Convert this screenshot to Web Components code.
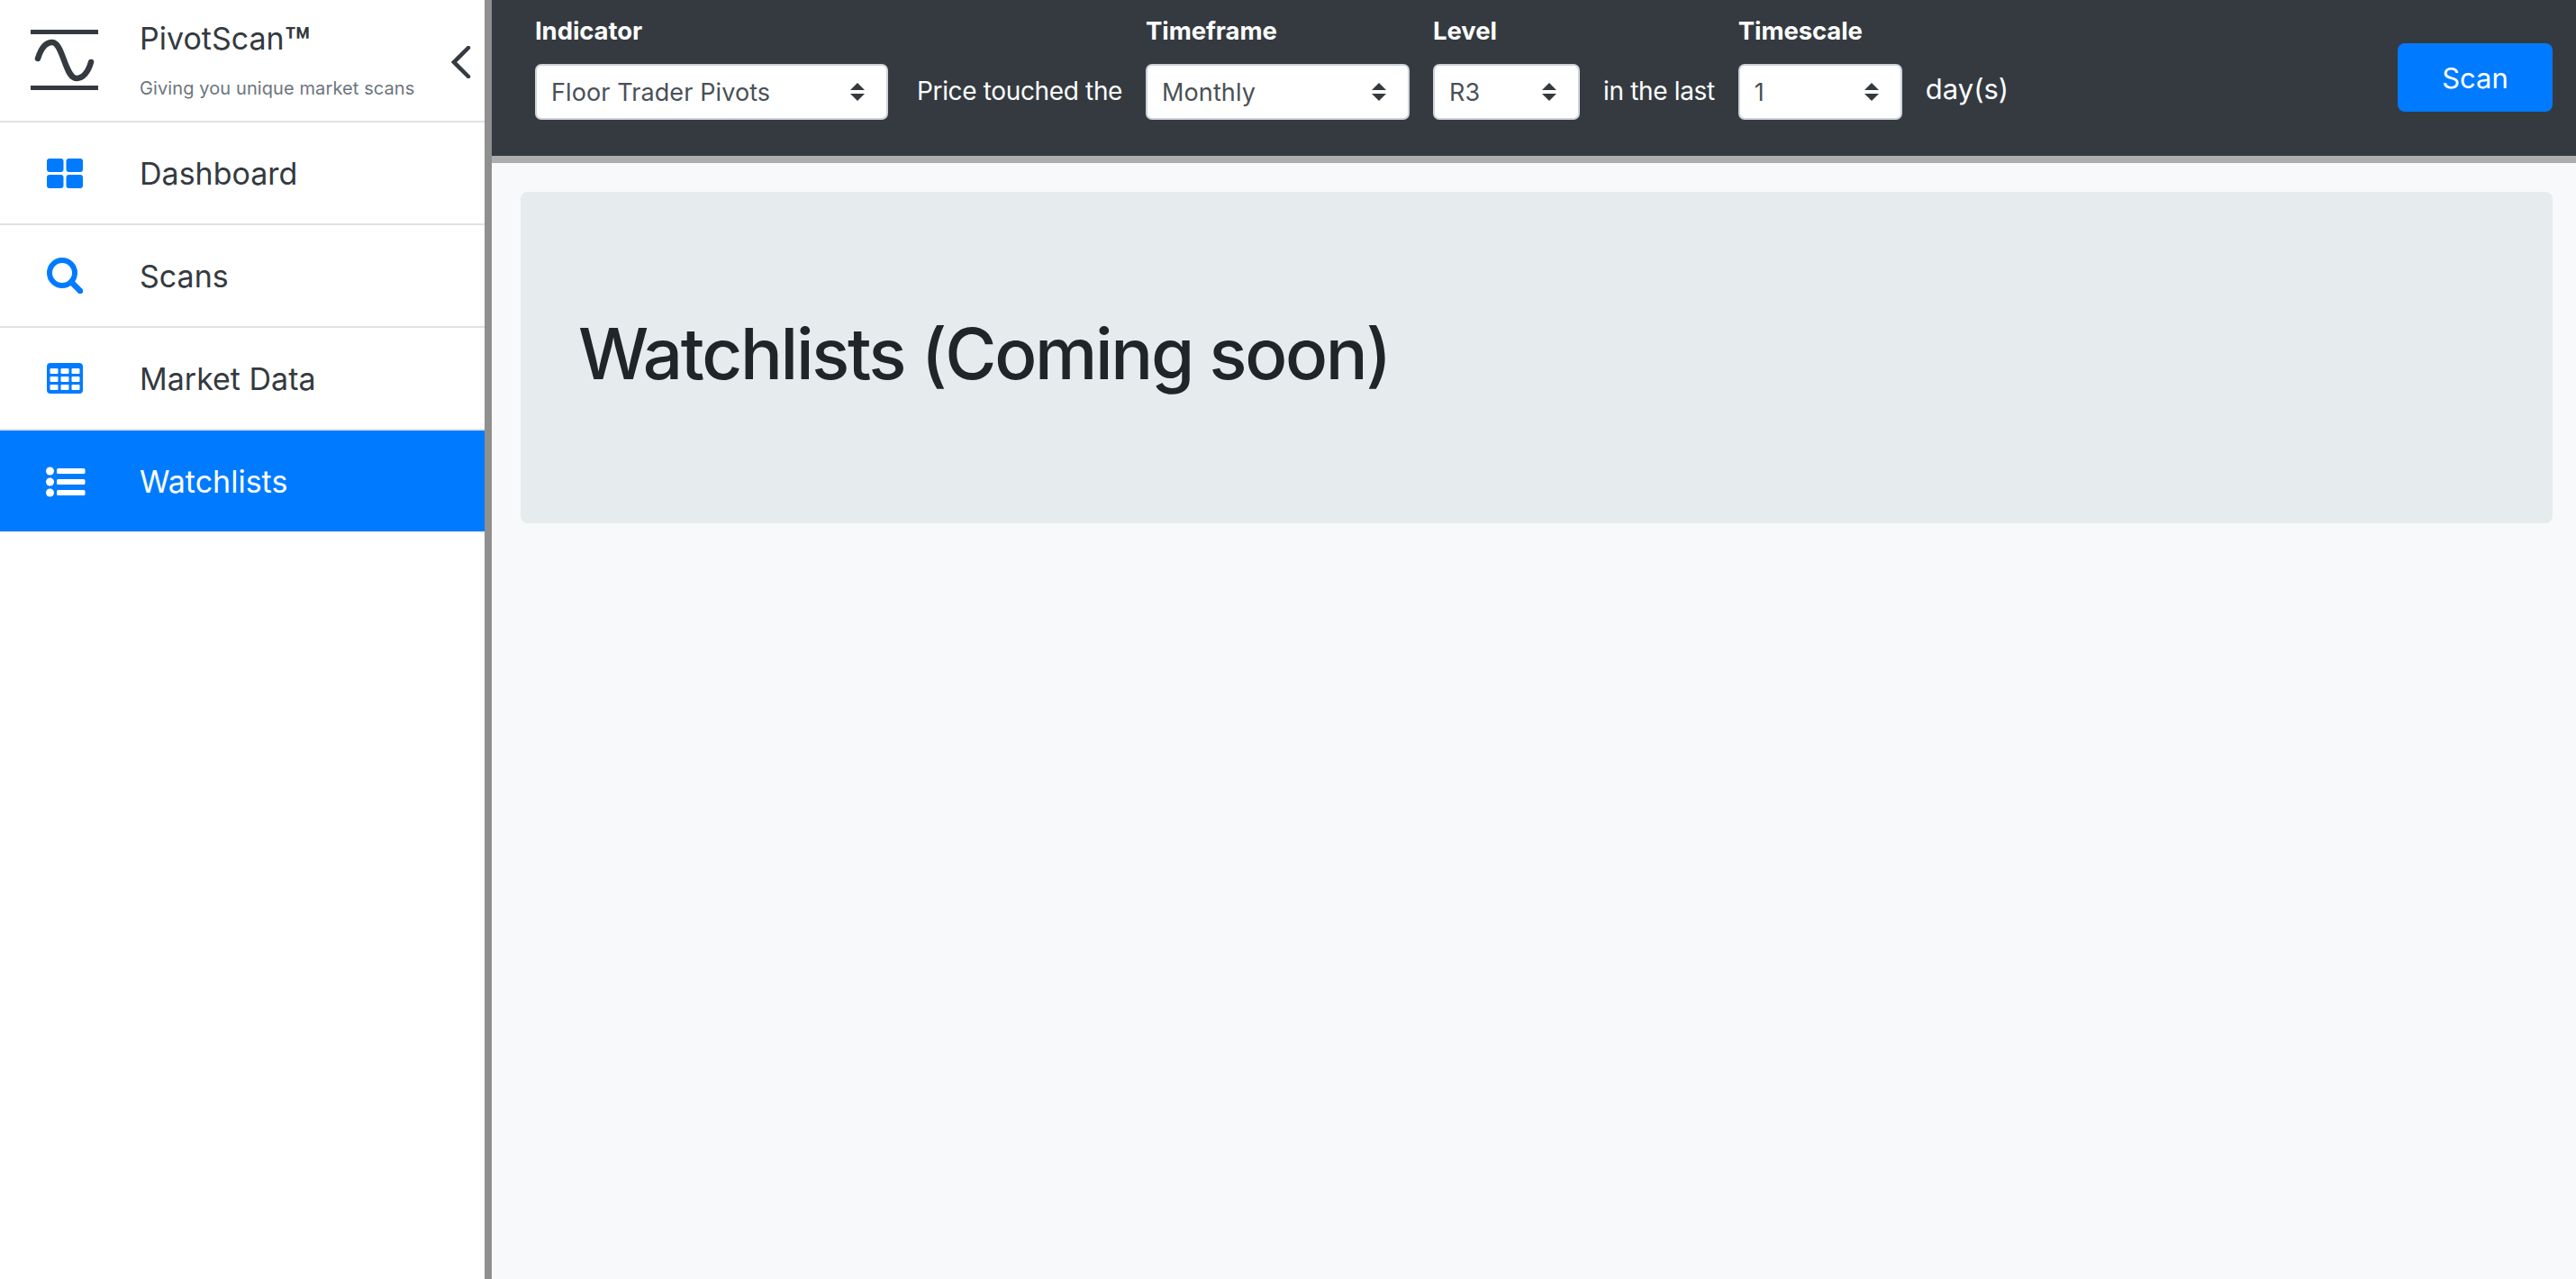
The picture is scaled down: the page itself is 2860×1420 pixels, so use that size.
<!DOCTYPE html>
<html lang="en">
<head>
  <meta charset="UTF-8">
  <title>PivotScan</title>
  <style>
    html, body {
      margin: 0;
      height: 100%;
    }

    body {
      font-family: Inter, "Liberation Sans", sans-serif;
      color: #343a40;
      background: #f8f9fa;
    }
  </style>
</head>
<body>
  <ps-app>
    <ps-sidebar slot="sidebar">
      <ps-nav-item label="Dashboard">
        <svg slot="icon" width="40" height="33" viewBox="0 0 40 33" fill="currentColor">
          <rect width="18.5" height="15" rx="3"/>
          <rect x="21.5" width="18.5" height="15" rx="3"/>
          <rect y="18" width="18.5" height="15" rx="3"/>
          <rect x="21.5" y="18" width="18.5" height="15" rx="3"/>
        </svg>
      </ps-nav-item>
      <ps-nav-item label="Scans">
        <svg slot="icon" width="40" height="40" viewBox="0 0 40 40" fill="none" stroke="currentColor">
          <circle cx="17" cy="17" r="14" stroke-width="6"/>
          <path d="M27 27 L37 37" stroke-width="6.5" stroke-linecap="round"/>
        </svg>
      </ps-nav-item>
      <ps-nav-item label="Market Data">
        <svg slot="icon" width="40" height="34" viewBox="0 0 40 34">
          <rect width="40" height="34" rx="4" fill="currentColor"/>
          <g fill="#fff">
            <rect x="3.5" y="6" width="9" height="6" rx="1"/>
            <rect x="15.5" y="6" width="9" height="6" rx="1"/>
            <rect x="27.5" y="6" width="9" height="6" rx="1"/>
            <rect x="3.5" y="15" width="9" height="6" rx="1"/>
            <rect x="15.5" y="15" width="9" height="6" rx="1"/>
            <rect x="27.5" y="15" width="9" height="6" rx="1"/>
            <rect x="3.5" y="24" width="9" height="6" rx="1"/>
            <rect x="15.5" y="24" width="9" height="6" rx="1"/>
            <rect x="27.5" y="24" width="9" height="6" rx="1"/>
          </g>
        </svg>
      </ps-nav-item>
      <ps-nav-item label="Watchlists" active>
        <svg slot="icon" width="44" height="34" viewBox="0 0 44 34" fill="currentColor" style="margin: 2px 0 0 -1px">
          <circle cx="4.5" cy="5" r="4.5"/>
          <circle cx="4.5" cy="17" r="4.5"/>
          <circle cx="4.5" cy="29" r="4.5"/>
          <rect x="12" y="2" width="31.5" height="6" rx="1.5"/>
          <rect x="12" y="14" width="31.5" height="6" rx="1.5"/>
          <rect x="12" y="26" width="31.5" height="6" rx="1.5"/>
        </svg>
      </ps-nav-item>
    </ps-sidebar>

    <ps-topbar slot="topbar">
      <ps-field label="Indicator"><ps-select value="Floor Trader Pivots" width="392"></ps-select></ps-field>
      <ps-text style="margin-left: 6px">Price touched the</ps-text>
      <ps-field label="Timeframe"><ps-select value="Monthly" width="293"></ps-select></ps-field>
      <ps-field label="Level"><ps-select value="R3" width="163"></ps-select></ps-field>
      <ps-text>in the last</ps-text>
      <ps-field label="Timescale"><ps-select value="1" width="182"></ps-select></ps-field>
      <ps-text style="font-size: 31px; margin-top: 69px; letter-spacing: 0">day(s)</ps-text>
      <ps-button>Scan</ps-button>
    </ps-topbar>

    <ps-jumbotron>Watchlists (Coming soon)</ps-jumbotron>
  </ps-app>

  <script>
    // Small helper so each class only has to say what its shadow root holds
    class PsElement extends HTMLElement {
      constructor() {
        super();
        this.attachShadow({ mode: 'open' });
      }

      connectedCallback() {
        this.shadowRoot.innerHTML = this.render();
      }
    }

    class PsApp extends PsElement {
      render() {
        return `
          <style>
            :host {
              display: flex;
              height: 100vh;
              overflow: hidden;
            }

            .side {
              flex: none;
              width: 538px;
              background: #fff;
              border-right: 8px solid #8f8f8f;
            }

            .main {
              flex: 1;
              min-width: 0;
            }
          </style>
          <div class="side"><slot name="sidebar"></slot></div>
          <div class="main">
            <slot name="topbar"></slot>
            <slot></slot>
          </div>
        `;
      }
    }

    class PsSidebar extends PsElement {
      render() {
        return `
          <style>
            :host {
              display: block;
            }

            header {
              display: flex;
              align-items: flex-start;
              height: 134px;
              padding-left: 34px;
              border-bottom: 2px solid #dee2e6;
            }

            .logo {
              flex: none;
              margin-top: 33px;
              margin-right: 46px;
            }

            .title {
              margin-top: 21px;
              font-size: 34px;
              line-height: 44px;
              color: #343a40;
            }

            /* Inter's trademark sign sits high and thin, the reference one is close to the caps */
            .tm {
              position: relative;
              top: 9px;
              font-size: 1.35em;
              font-weight: 600;
              line-height: 0;
            }

            .sub {
              margin-top: 18px;
              font-size: 20px;
              line-height: 30px;
              letter-spacing: 0.1px;
              color: #6c757d;
              white-space: nowrap;
            }

            .back {
              margin: 51px 15px 0 auto;
            }
          </style>
          <header>
            <svg class="logo" width="75" height="67" viewBox="0 0 75 67" fill="none" stroke="#343a40">
              <path d="M0 2.5H75M0 64.5H75" stroke-width="5"/>
              <path d="M8 32C12 19 18 14 24 14C36 14 38 54 51 54C58 54 64 47 67 36" stroke-width="6.5" stroke-linecap="round"/>
            </svg>
            <div>
              <div class="title">PivotScan<span class="tm">™</span></div>
              <div class="sub">Giving you unique market scans</div>
            </div>
            <svg class="back" width="22" height="36" viewBox="0 0 22 36" fill="none" stroke="#343a40" stroke-width="4.5" stroke-linecap="round">
              <path d="M19 2L3 18L19 34"/>
            </svg>
          </header>
          <slot></slot>
        `;
      }
    }

    class PsNavItem extends PsElement {
      render() {
        return `
          <style>
            :host {
              display: flex;
              align-items: center;
              height: 112px;
              padding-left: 52px;
              border-bottom: 2px solid #dee2e6;
              color: #343a40;
              font-size: 34px;
            }

            :host([active]) {
              background: #007bff;
              color: #fff;
              border-bottom-color: #f1f3f5;
            }

            .icon {
              flex: none;
              display: flex;
              width: 103px;
              color: #007bff;
            }

            :host([active]) .icon {
              color: #fff;
            }
          </style>
          <span class="icon"><slot name="icon"></slot></span>
          <span>${this.getAttribute('label')}</span>
        `;
      }
    }

    class PsTopbar extends PsElement {
      render() {
        return `
          <style>
            :host {
              display: flex;
              align-items: flex-start;
              gap: 26px;
              height: 173px;
              padding-left: 48px;
              background: #343a40;
              border-bottom: 8px solid #adadad;
              color: #fff;
            }
          </style>
          <slot></slot>
        `;
      }
    }

    class PsField extends PsElement {
      render() {
        return `
          <style>
            :host {
              display: flex;
              flex-direction: column;
              padding-top: 15px;
            }

            label {
              height: 56px;
              font-size: 27.5px;
              line-height: 38px;
              font-weight: 700;
              letter-spacing: -0.1px;
              white-space: nowrap;
            }
          </style>
          <label>${this.getAttribute('label')}</label>
          <slot></slot>
        `;
      }
    }

    class PsSelect extends PsElement {
      render() {
        return `
          <style>
            :host {
              display: flex;
              align-items: center;
              justify-content: space-between;
              box-sizing: border-box;
              width: ${this.getAttribute('width')}px;
              height: 62px;
              padding: 0 24px 0 16px;
              background: #fff;
              border: 2px solid #ced4da;
              border-radius: 7px;
              color: #495057;
              font-size: 27px;
              letter-spacing: 0.1px;
            }
          </style>
          <span>${this.getAttribute('value')}</span>
          <svg width="16" height="20" viewBox="0 0 16 20" fill="#343a40">
            <path d="M8 0L16 8H0Z"/>
            <path d="M8 20L0 12H16Z"/>
          </svg>
        `;
      }
    }

    class PsText extends PsElement {
      render() {
        return `
          <style>
            :host {
              display: block;
              margin-top: 71px;
              font-size: 28px;
              line-height: 60px;
              letter-spacing: -0.35px;
              white-space: nowrap;
            }
          </style>
          <slot></slot>
        `;
      }
    }

    class PsButton extends PsElement {
      render() {
        return `
          <style>
            :host {
              display: flex;
              align-items: center;
              justify-content: center;
              width: 172px;
              height: 76px;
              margin: 48px 26px 0 auto;
              background: #007bff;
              border-radius: 8px;
              color: #fff;
              font-size: 31px;
            }
          </style>
          <slot></slot>
        `;
      }
    }

    class PsJumbotron extends PsElement {
      render() {
        return `
          <style>
            :host {
              display: flex;
              align-items: center;
              height: 368px;
              margin: 32px 26px 0 32px;
              padding-left: 64px;
              background: #e6ebee;
              border-radius: 8px;
              color: #212529;
              font-size: 78px;
              font-weight: 500;
              letter-spacing: -2.3px;
            }

            span {
              position: relative;
              top: -5px;
            }
          </style>
          <span><slot></slot></span>
        `;
      }
    }

    customElements.define('ps-app', PsApp);
    customElements.define('ps-sidebar', PsSidebar);
    customElements.define('ps-nav-item', PsNavItem);
    customElements.define('ps-topbar', PsTopbar);
    customElements.define('ps-field', PsField);
    customElements.define('ps-select', PsSelect);
    customElements.define('ps-text', PsText);
    customElements.define('ps-button', PsButton);
    customElements.define('ps-jumbotron', PsJumbotron);
  </script>
</body>
</html>
